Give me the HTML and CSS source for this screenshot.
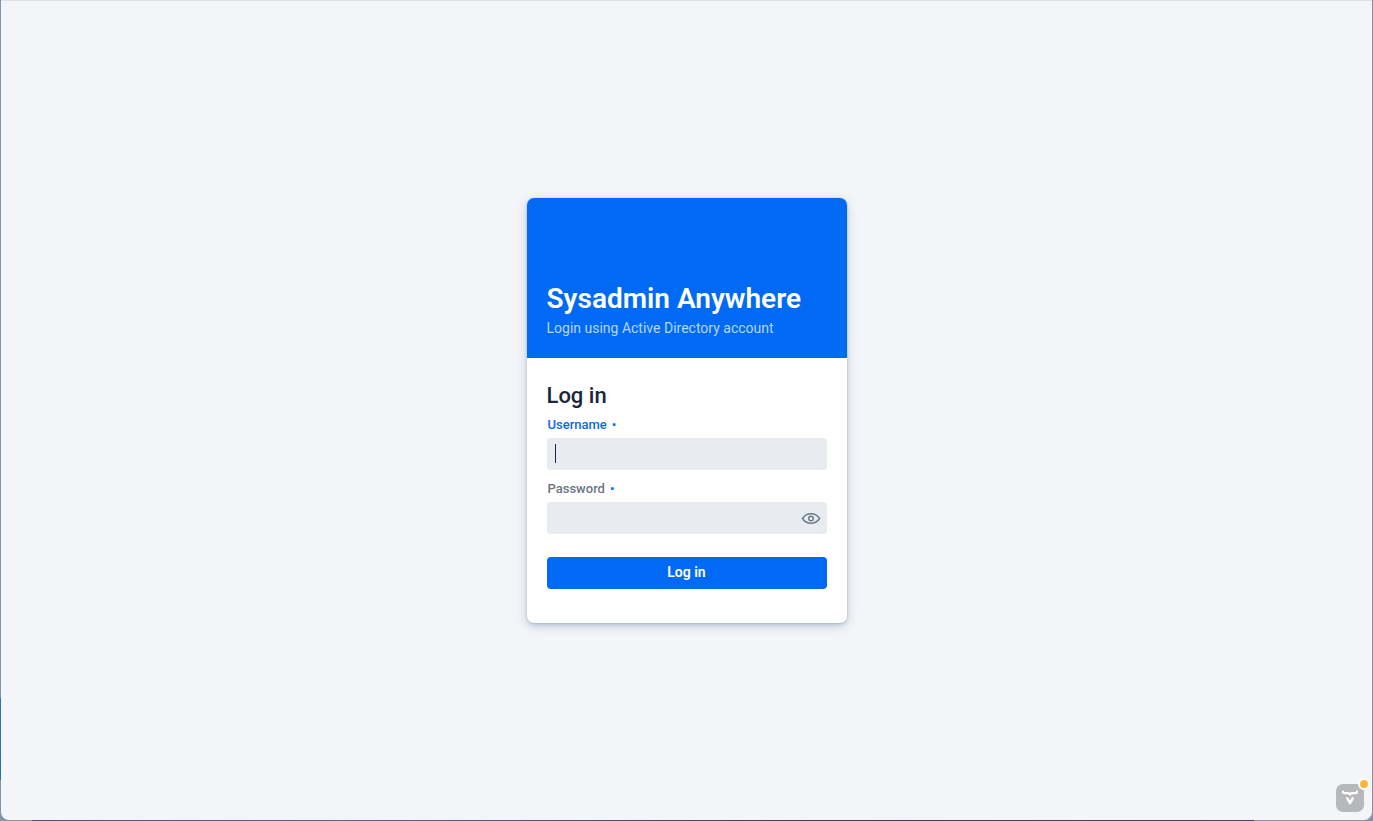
FILE: index.html
```html
<!DOCTYPE html>
<html lang="en">
<head>
<meta charset="utf-8">
<meta name="viewport" content="width=device-width, initial-scale=1">
<title>Sysadmin Anywhere</title>
<link rel="stylesheet" href="styles.css">
</head>
<body>
<div class="window">
  <main class="card">
    <header class="brand">
      <h1 class="brand-title">Sysadmin Anywhere</h1>
      <p class="brand-text">Login using Active Directory account</p>
    </header>
    <form class="form">
      <h2 class="form-title">Log in</h2>
      <div class="field field-active">
        <label class="label" for="username">Username</label>
        <div class="control">
          <input class="input" id="username" type="text" required>
          <span class="caret"></span>
        </div>
      </div>
      <div class="field">
        <label class="label" for="password">Password</label>
        <div class="control">
          <input class="input" id="password" type="password" required>
          <button class="reveal" type="button" aria-label="Show password">
            <svg width="20" height="14" viewBox="0 0 20 14" fill="none" stroke="currentColor" stroke-width="1.5">
              <path d="M1.500 7.500C3.500 4.200 6.500 2.700 10 2.700S16.500 4.200 18.500 7.500C16.500 10.800 13.500 12.300 10 12.300S3.500 10.800 1.500 7.500Z"/>
              <circle cx="10" cy="7.500" r="2.300"/>
            </svg>
          </button>
        </div>
      </div>
      <button class="submit" type="submit">Log in</button>
    </form>
  </main>
  <button class="devtools" type="button" aria-label="Development tools">
    <svg width="18" height="18" viewBox="0 0 18 18" fill="none" stroke="currentColor" stroke-linecap="round" stroke-linejoin="round">
      <path stroke-width="2.200" d="M2 2.500V3Q2 4.200 3.200 4.200H6.800Q8.800 4.200 9 5.600Q9.200 4.200 11.200 4.200H14.800Q16 4.200 16 3V2.500"/>
      <path stroke-width="2.400" d="M6.200 9.200L9 14.200L11.800 9.200"/>
    </svg>
    <span class="badge"></span>
  </button>
</div>
</body>
</html>
```
FILE: styles.css
```css
* { box-sizing: border-box; }
body {
  margin: 0;
  min-height: 100vh;
  display: flex;
  padding: 0 1px 1px;
  font-family: Roboto, sans-serif;
  color: #1a2639;
  background:
    linear-gradient(#2b78b0, #1f72ad) 0 698px / 1px 82px no-repeat,
    linear-gradient(90deg, #8095ab 32px, #2c5a96 32px, #3c6fae 25%, #24406f 60%, #2c4a7c 1254px, #8095ab 1254px) bottom / 100% 1px no-repeat,
    #8095a8;
}
.window {
  position: relative;
  flex: 1;
  display: flex;
  align-items: center;
  justify-content: center;
  border-top: 1px solid #dfe1e3;
  border-radius: 0 0 8px 8px;
  background: #f3f5f8;
}
.card {
  width: 320px;
  max-width: 100%;
  overflow: hidden;
  border-radius: 7px;
  background: #fff;
  box-shadow: 0 0 0 1px rgba(25, 59, 103, .05), 0 2px 4px -1px rgba(25, 59, 103, .2), 0 3px 12px -1px rgba(25, 59, 103, .25);
}
.brand {
  display: flex;
  flex-direction: column;
  justify-content: flex-end;
  min-height: 160px;
  padding: 20px 20px 19px;
  background: #006af5;
  color: #fff;
}
.brand-title {
  margin: 0;
  font-size: 28px;
  line-height: 36px;
  font-weight: 600;
}
.brand-text {
  margin: 0;
  font-size: 14px;
  line-height: 22px;
  color: #b8d5fc;
}
.form { padding: 24px 20px 34px; }
.form-title {
  margin: 0;
  font-size: 22px;
  line-height: 28px;
  font-weight: 500;
}
.field { margin: 6px 0 10px; }
.label {
  display: block;
  padding-left: 1px;
  font-size: 13px;
  line-height: 18px;
  font-weight: 500;
  margin-bottom: 4px;
  color: #6b7583;
}
.field-active .label { color: #0b6ae6; }
.label::after { content: "•"; margin-left: 5px; color: #0b6ae6; }
.control {
  position: relative;
  display: flex;
  height: 32px;
  border-radius: 4px;
  background: #e8ebef;
}
.input {
  flex: 1;
  min-width: 0;
  padding: 0 8px;
  border: 0;
  outline: 0;
  background: transparent;
  font: 14px Roboto, sans-serif;
  color: inherit;
}
.caret {
  position: absolute;
  left: 8px;
  top: 6px;
  width: 1px;
  height: 19px;
  background: #1a2639;
}
.reveal {
  display: grid;
  place-items: center;
  width: 32px;
  padding: 0;
  border: 0;
  background: none;
  color: #6d7b8c;
}
.submit {
  display: block;
  width: 100%;
  height: 32px;
  margin-top: 23px;
  padding: 0 0 2px;
  border: 0;
  border-radius: 4px;
  background: #006af5;
  color: #fff;
  font: 600 14px Roboto, sans-serif;
}
.devtools {
  position: absolute;
  right: 8px;
  bottom: 8px;
  display: grid;
  place-items: center;
  width: 28px;
  height: 28px;
  padding: 0;
  border: 0;
  border-radius: 7px;
  background: #b7b8ba;
  color: #fff;
}
.badge {
  position: absolute;
  top: -6px;
  right: -6px;
  width: 12px;
  height: 12px;
  border: 2px solid #fff;
  border-radius: 50%;
  background: #fdb73e;
}
```
